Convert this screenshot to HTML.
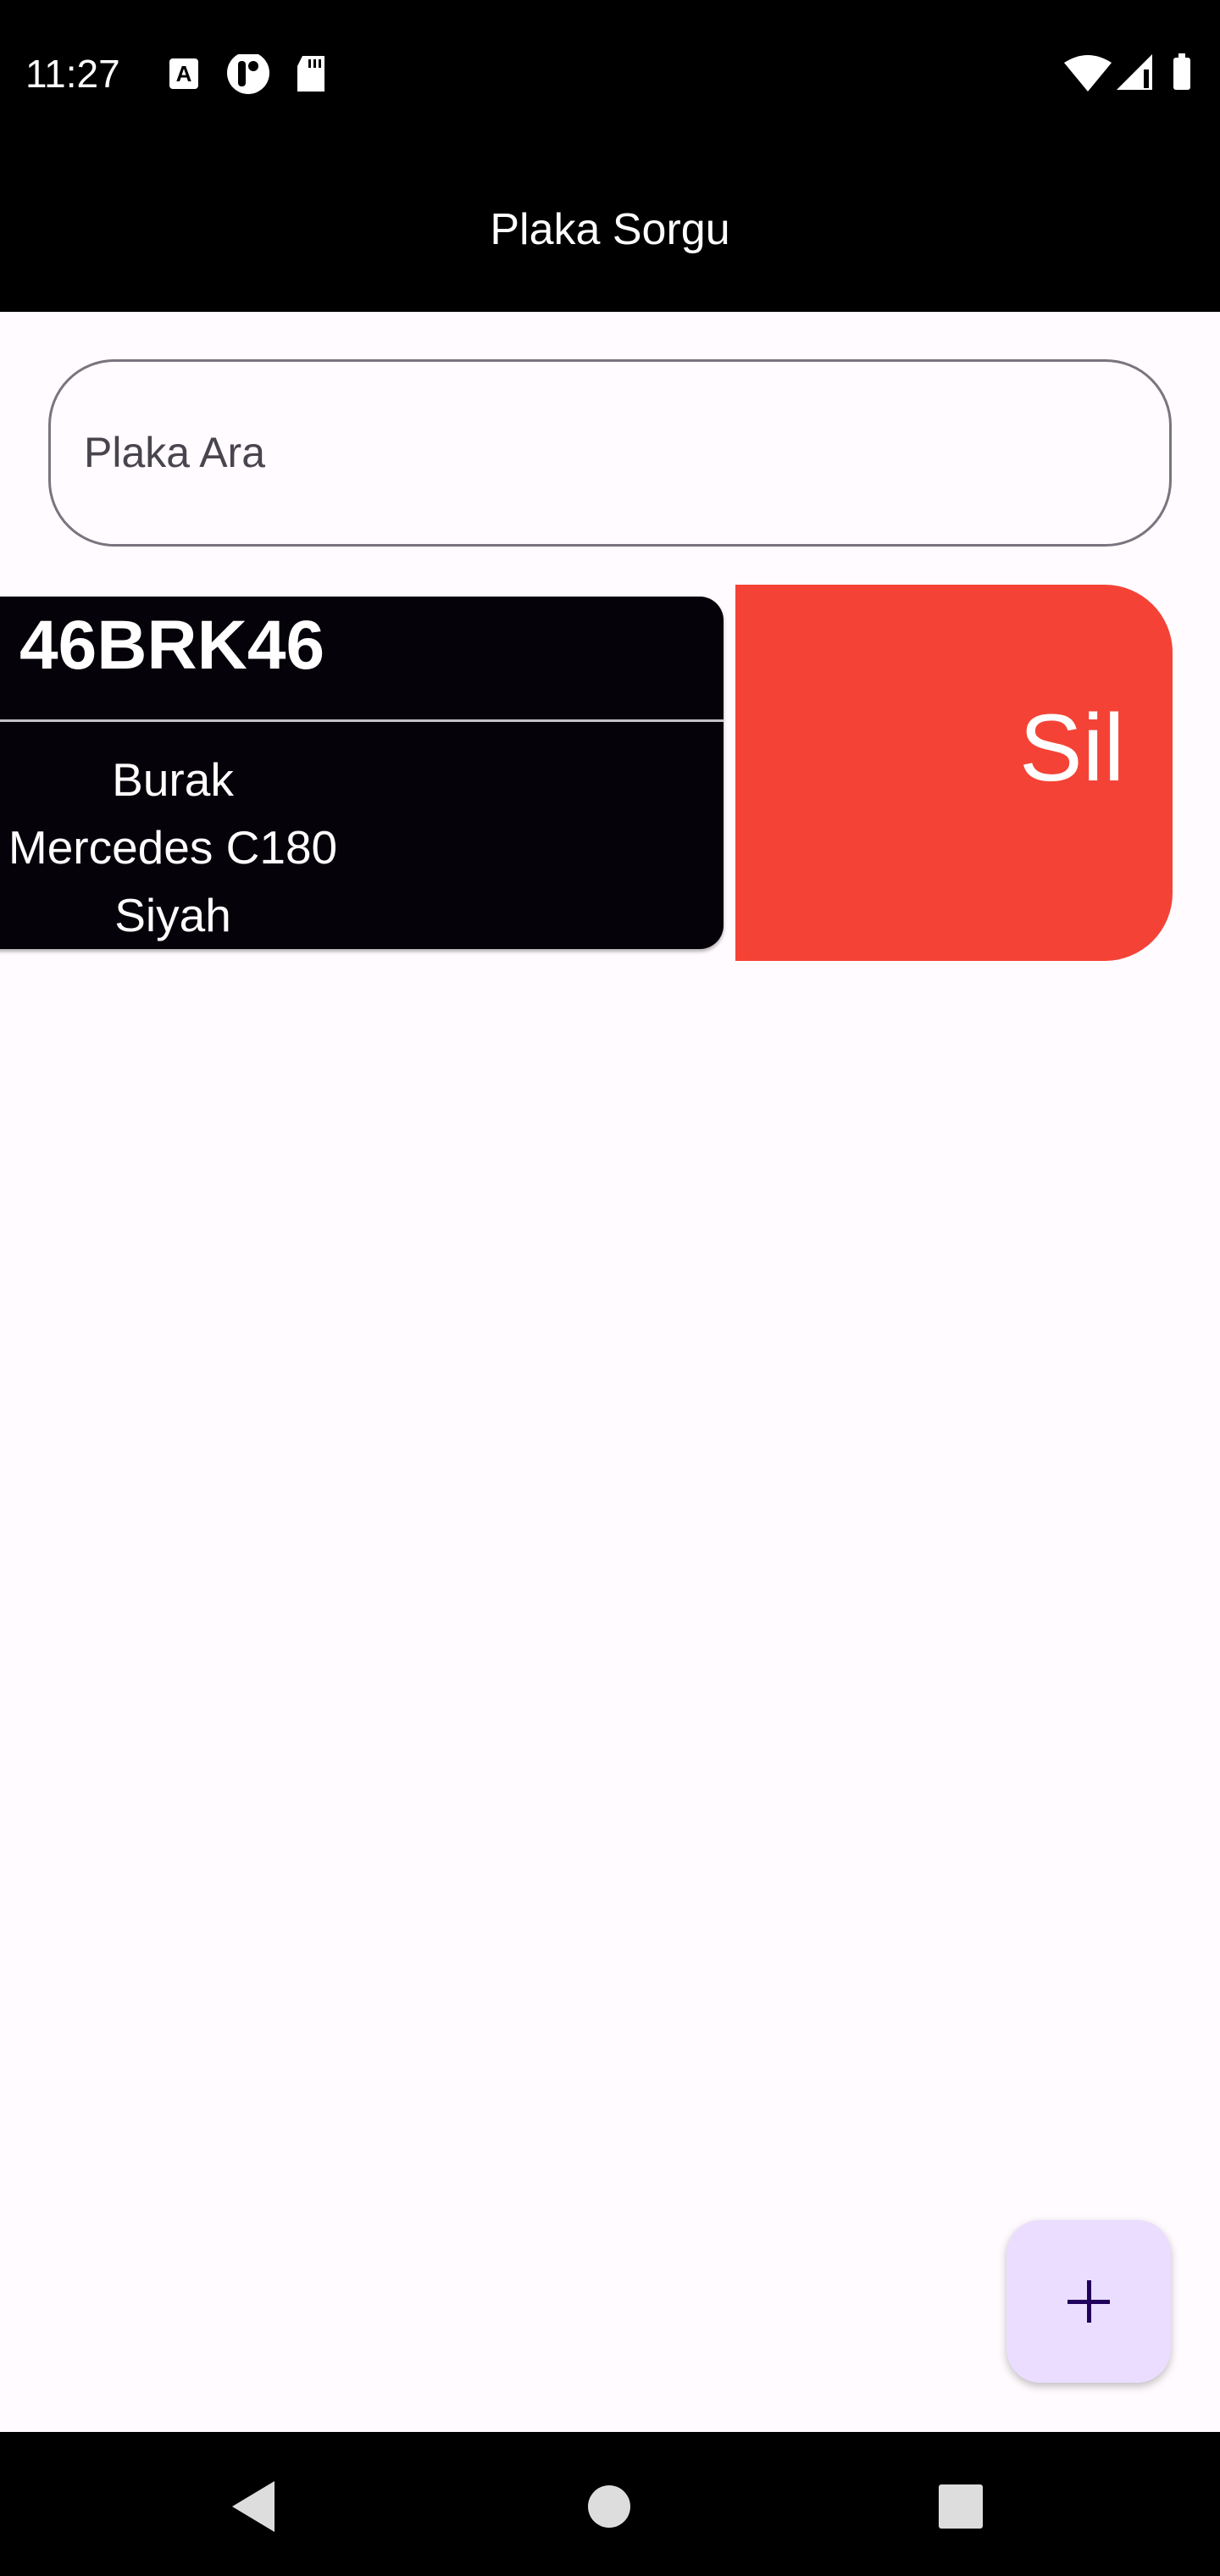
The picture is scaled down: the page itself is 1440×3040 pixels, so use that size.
<!DOCTYPE html>
<html><head><meta charset="utf-8"><style>
*{margin:0;padding:0;box-sizing:border-box}
body{width:1440px;height:3040px;background:#FFFBFE;position:relative;overflow:hidden;font-family:"Liberation Sans",Roboto,sans-serif}
.abs{position:absolute}
</style></head><body>
<div class="abs" style="left:0;top:0;width:1440px;height:368px;background:#000"></div>
<div class="abs" style="left:30px;top:62px;color:#fff;font-size:46px;line-height:50px">11:27</div>
<!-- status icons -->
<svg class="abs" style="left:195px;top:64px" width="200" height="50" viewBox="0 0 200 50">
 <rect x="5" y="5" width="34" height="36" rx="4" fill="#fff"/>
 <text x="22" y="32" font-size="26" font-weight="bold" text-anchor="middle" fill="#000" font-family="Liberation Sans">A</text>
 <circle cx="98" cy="22" r="25" fill="#fff"/>
 <rect x="86" y="8" width="9" height="30" rx="4" fill="#000"/>
 <circle cx="104" cy="14" r="6" fill="#000"/>
 <path d="M162 2 H188 V44 H156 V14 Z" fill="#fff"/>
 <rect x="169" y="6" width="3" height="10" fill="#000"/><rect x="175" y="6" width="3" height="10" fill="#000"/><rect x="181" y="6" width="3" height="10" fill="#000"/>
</svg>
<svg class="abs" style="left:1250px;top:62px" width="180" height="50" viewBox="0 0 180 50">
 <path d="M6 12 Q34 -6 62 12 L34 46 Z" fill="#fff"/>
 <path d="M110 2 V44 H68 Z" fill="#fff"/>
 <rect x="100" y="20" width="6" height="22" fill="#000"/>
 <rect x="135" y="6" width="20" height="38" rx="3" fill="#fff"/>
 <rect x="141" y="1" width="8" height="6" fill="#fff"/>
</svg>
<div class="abs" style="left:0;width:1440px;top:236px;text-align:center;color:#fff;font-size:52px;line-height:70px">Plaka Sorgu</div>

<!-- search -->
<div class="abs" style="left:57px;top:424px;width:1326px;height:221px;border:3px solid #79747E;border-radius:78px"></div>
<div class="abs" style="left:99px;top:502px;color:#49454F;font-size:50px;line-height:64px">Plaka Ara</div>

<!-- delete bg -->
<div class="abs" style="left:868px;top:690px;width:516px;height:444px;background:#F44336;border-radius:0 80px 80px 0"></div>
<div class="abs" style="left:1203px;top:818px;color:#fff;font-size:112px;line-height:130px">Sil</div>

<!-- card -->
<div class="abs" style="left:-40px;top:704px;width:894px;height:416px;background:#06020A;border-radius:28px;box-shadow:0 3px 4px rgba(0,0,0,.3)"></div>
<div class="abs" style="left:23px;top:712px;color:#fff;font-size:82px;font-weight:bold;line-height:100px">46BRK46</div>
<div class="abs" style="left:0;top:849px;width:854px;height:3px;background:#C6C1C9"></div>
<div class="abs" style="left:0;top:880px;width:408px;text-align:center;color:#fff;font-size:55px;line-height:80px">Burak<br>Mercedes C180<br>Siyah</div>

<!-- FAB -->
<div class="abs" style="left:1188px;top:2620px;width:194px;height:192px;background:#EADDFF;border-radius:40px;box-shadow:0 4px 10px rgba(0,0,0,.25)"></div>
<div class="abs" style="left:1260px;top:2714px;width:50px;height:5px;background:#21005D"></div>
<div class="abs" style="left:1283px;top:2691px;width:5px;height:50px;background:#21005D"></div>

<!-- nav bar -->
<div class="abs" style="left:0;top:2870px;width:1440px;height:170px;background:#000"></div>
<svg class="abs" style="left:0;top:2870px" width="1440" height="170">
 <path d="M324 58 V118 L274 88 Z" fill="#ddd"/>
 <circle cx="719" cy="88" r="25" fill="#ddd"/>
 <rect x="1108" y="62" width="52" height="52" rx="3" fill="#ddd"/>
</svg>
</body></html>
